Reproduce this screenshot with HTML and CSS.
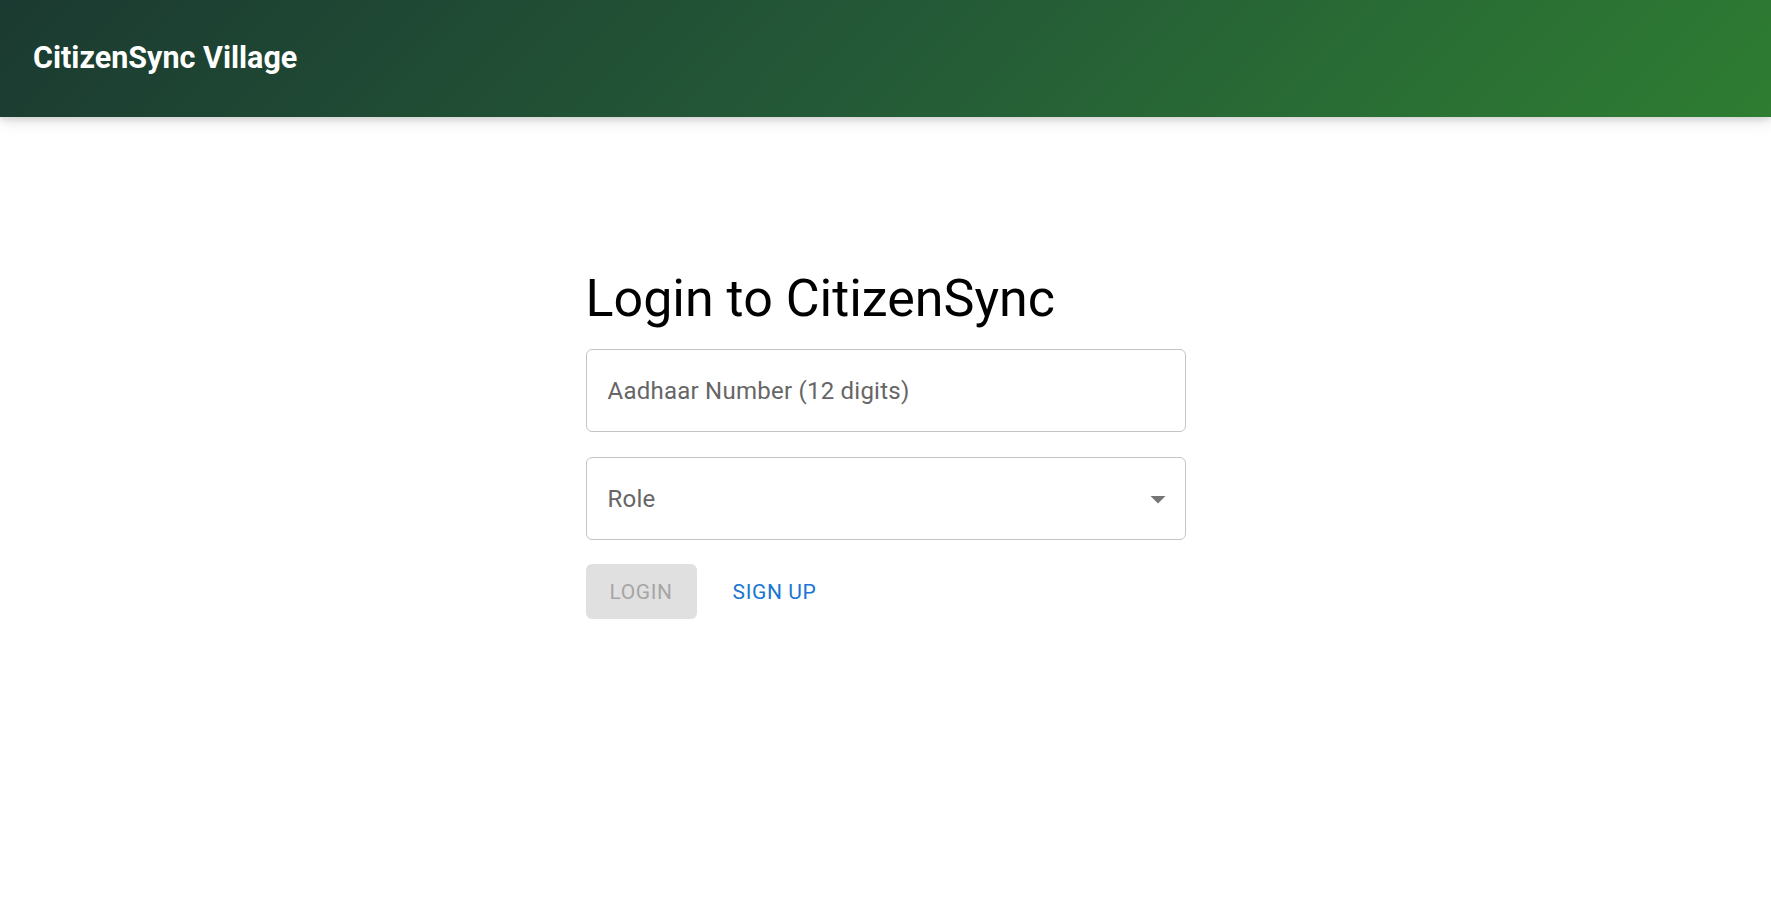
FILE: index.html
```html
<!DOCTYPE html>
<html lang="en">
<head>
<meta charset="utf-8">
<title>CitizenSync Village</title>
<link rel="stylesheet" href="styles.css">
</head>
<body>
<header class="appbar">
  <div class="brand">CitizenSync Village</div>
</header>
<main class="container">
  <h1 class="title">Login to CitizenSync</h1>
  <div class="field">
    <span class="placeholder">Aadhaar Number (12 digits)</span>
  </div>
  <div class="field select">
    <span class="placeholder">Role</span>
    <svg class="arrow" viewBox="0 0 24 24" width="36" height="36" aria-hidden="true"><path d="M7 10l5 5 5-5z"/></svg>
  </div>
  <div class="actions">
    <button class="btn btn-disabled" disabled>Login</button>
    <button class="btn btn-text">Sign Up</button>
  </div>
</main>
</body>
</html>
```

FILE: styles.css
```css
html, body {
  margin: 0;
  padding: 0;
  background: #ffffff;
  font-family: Roboto, "Liberation Sans", Arial, sans-serif;
}

.appbar {
  height: 117px;
  display: flex;
  align-items: center;
  padding: 0 33px;
  background: linear-gradient(135deg, #1b3a31 0%, #245a37 50%, #2e7d32 100%);
  box-shadow: 0 3px 6px rgba(0,0,0,0.12), 0 6px 15px rgba(0,0,0,0.08);
  position: relative;
  z-index: 1;
}

.brand {
  color: #ffffff;
  font-weight: 700;
  font-size: 30.5px;
  line-height: 1;
}

.container {
  width: 600px;
  margin: 0 auto;
  padding-top: 150px;
}

.title {
  margin: 0;
  font-weight: 400;
  font-size: 52px;
  line-height: 63px;
  color: #000000;
}

.field {
  box-sizing: border-box;
  height: 83px;
  margin-top: 19px;
  border: 1px solid #c4c4c4;
  border-radius: 6px;
  display: flex;
  align-items: center;
  padding: 0 21px;
}

.field + .field {
  margin-top: 25px;
}

.placeholder {
  font-size: 24px;
  color: #666666;
  letter-spacing: 0.01em;
}

.select {
  justify-content: space-between;
  padding-right: 9px;
}

.arrow {
  fill: #757575;
}

.actions {
  display: flex;
  align-items: center;
  gap: 24px;
  margin-top: 24px;
}

.btn {
  font-family: Roboto, "Liberation Sans", Arial, sans-serif;
  font-size: 21px;
  font-weight: 400;
  letter-spacing: 0.6px;
  text-transform: uppercase;
  border: 0;
  border-radius: 6px;
  height: 55px;
  background: transparent;
}

.btn-disabled {
  background: #e0e0e0;
  color: #a6a6a6;
  padding: 0 24px;
  min-width: 111px;
}

.btn-text {
  color: #1976d2;
  padding: 0 12px;
}
```
